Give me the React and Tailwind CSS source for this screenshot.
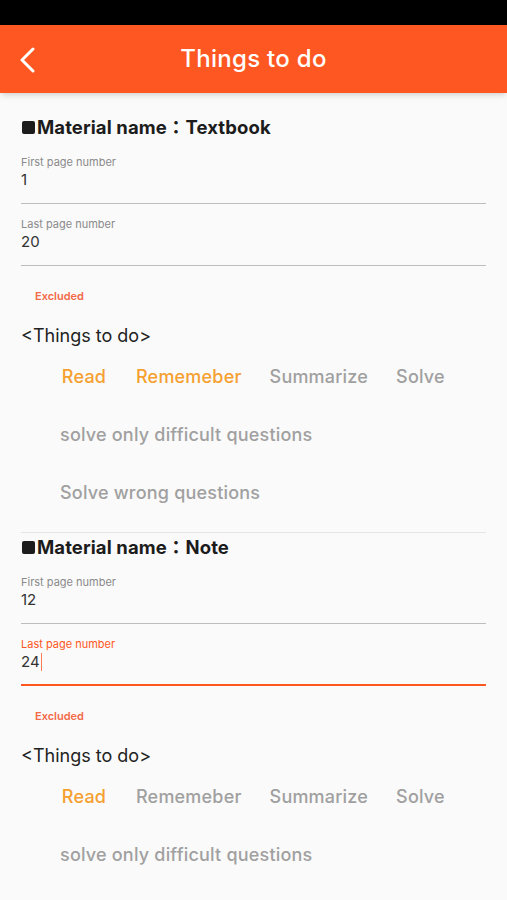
import React from 'react';

const FONT = { fontFamily: 'Inter, "Noto Sans CJK JP", sans-serif' };

const TASKS = ['Read', 'Rememeber', 'Summarize', 'Solve', 'solve only difficult questions', 'Solve wrong questions'];

const Field = ({ label, value, focused }) => (
  <div
    className={`h-[62px] flex flex-col pt-[13px] ${focused ? 'border-b-2 border-[#ff5722]' : 'border-b-[1.5px] border-[#bdbdbd]'}`}
  >
    <div className={`text-[11px] leading-[14px] ${focused ? 'text-[#ff5722]' : 'text-[#8a8a8a]'}`}>{label}</div>
    <div className="mt-[1px] text-[15px] leading-[20px] text-[#333] flex items-center">
      {value}
      {focused && <span className="inline-block w-[1.5px] h-[18px] bg-[#ff7a50] ml-[1px]" />}
    </div>
  </div>
);

const Section = ({ name, first, last, focusLast, selected }) => (
  <div className="flex flex-col">
    <div className="h-[24px] leading-[24px] text-[18.5px] tracking-[0.1px] font-bold text-[#1c1c1c] flex items-center">
      <span className="inline-block w-[13px] h-[13px] rounded-[2px] bg-[#1c1c1c] mr-[2px] ml-[1px]" />
      <span>Material name：{name}</span>
    </div>
    <div className="mt-[3px]">
      <Field label="First page number" value={first} />
      <Field label="Last page number" value={last} focused={focusLast} />
    </div>
    <div className="mt-[23px] h-[14px] leading-[14px] pl-[14px] text-[11px] font-semibold text-[#f36a48]">Excluded</div>
    <div className="mt-[21px] h-[24px] leading-[24px] text-[18px] text-[#222]">&lt;Things to do&gt;</div>
    <div className="mt-[4px] pl-[31px] flex flex-wrap gap-x-[12px] gap-y-[10px]">
      {TASKS.map((t) => (
        <div
          key={t}
          className={`h-[48px] min-w-[64px] px-2 flex items-center justify-center text-[18px] tracking-[0.2px] font-medium ${
            selected.includes(t) ? 'text-[#f5a030]' : 'text-[#a0a0a0]'
          }`}
        >
          {t}
        </div>
      ))}
    </div>
    <div className="mt-[16px] h-px bg-[#e4e4e4]" />
    <div className="h-[2px]" />
  </div>
);

export default function App() {
  return (
    <div className="w-[507px] h-[900px] overflow-hidden bg-[#fafafa]" style={FONT}>
      <div className="h-[25px] bg-black" />
      <div className="h-[68px] bg-[#ff5722] shadow-md flex items-center relative">
        <svg className="absolute left-[18px] top-[22px]" width="20" height="26" viewBox="0 0 20 26">
          <polyline points="15,2 4,13 15,24" fill="none" stroke="white" strokeWidth="3" strokeLinecap="round" strokeLinejoin="round" />
        </svg>
        <div className="flex-1 text-center text-white text-[24px] tracking-[0.3px] font-medium">Things to do</div>
      </div>
      <div className="px-[21px] pt-[22px]">
        <Section name="Textbook" first="1" last="20" selected={['Read', 'Rememeber']} />
        <Section name="Note" first="12" last="24" focusLast selected={['Read']} />
      </div>
    </div>
  );
}
